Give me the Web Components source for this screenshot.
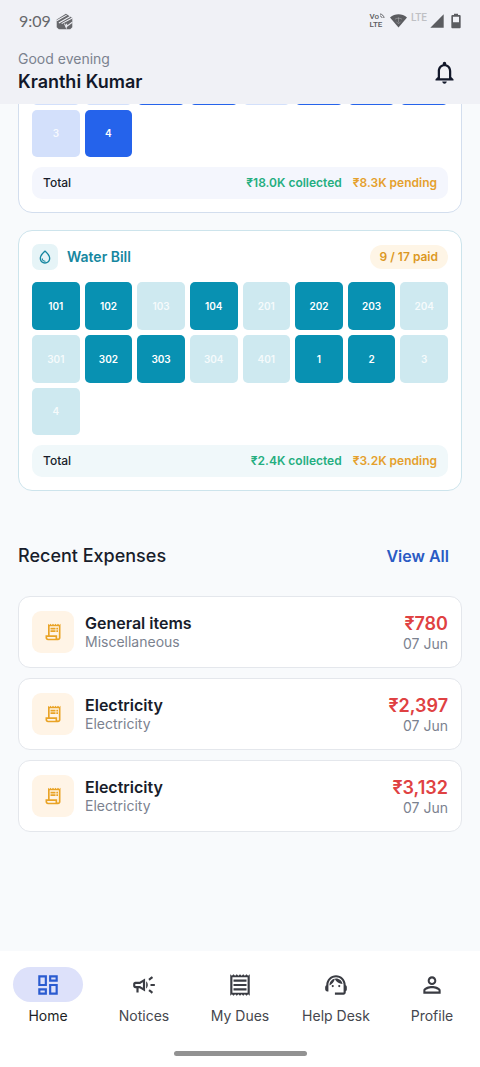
<!DOCTYPE html>
<html lang="en">
<head>
<meta charset="utf-8">
<meta name="viewport" content="width=device-width, initial-scale=1">
<title>Society Dues</title>
<style>
  body { margin: 0; background: #f8fafc; color: #181d2b; font-family: Inter, "Noto Sans", sans-serif; }
</style>
</head>
<body>
<society-app></society-app>
<script>
const ICONS = {
  home: '<path d="M19 5v2h-4V5h4M9 5v6H5V5h4m10 8v6h-4v-6h4M9 17v2H5v-2h4M21 3h-8v6h8V3zM11 3H3v10h8V3zm10 8h-8v10h8V11zm-10 4H3v6h8v-6z"/>',
  notices: '<path d="M18 11v2h4v-2h-4zM16 17.61c.96.71 2.21 1.65 3.2 2.39.4-.53.8-1.07 1.2-1.6-.99-.74-2.24-1.68-3.2-2.4-.4.54-.8 1.08-1.2 1.61zM20.4 5.6c-.4-.53-.8-1.07-1.2-1.6-.99.74-2.24 1.68-3.2 2.4.4.53.8 1.07 1.2 1.6.96-.72 2.21-1.65 3.2-2.4zM4 9c-1.1 0-2 .9-2 2v2c0 1.1.9 2 2 2h1v4h2v-4h1l5 3V6L8 9H4zm5.03 1.71L11 9.53v4.94l-1.97-1.18-.48-.29H4v-2h4.55l.48-.29zM15.5 12c0-1.33-.58-2.53-1.5-3.35v6.69c.92-.81 1.5-2.01 1.5-3.34z"/>',
  dues: '<path d="M19.5 3.5L18 2l-1.5 1.5L15 2l-1.5 1.5L12 2l-1.5 1.5L9 2 7.5 3.5 6 2 4.5 3.5 3 2v20l1.5-1.5L6 22l1.5-1.5L9 22l1.5-1.5L12 22l1.5-1.5L15 22l1.5-1.5L18 22l1.5-1.5L21 22V2l-1.5 1.5zM19 19.09H5V4.91h14v14.18zM6 15h12v2H6zm0-4h12v2H6zm0-4h12v2H6z"/>',
  help: '<path d="M21 12.22C21 6.73 16.74 3 12 3c-4.69 0-9 3.65-9 9.28-.6.34-1 .98-1 1.72v2c0 1.1.9 2 2 2h1v-6.1c0-3.87 3.13-7 7-7s7 3.13 7 7V19h-8v2h8c1.1 0 2-.9 2-2v-1.22c.59-.31 1-.92 1-1.64v-2.3c0-.7-.41-1.31-1-1.62z"/><circle cx="9" cy="13" r="1"/><circle cx="15" cy="13" r="1"/><path d="M18 11.03C17.52 8.18 15.04 6 12.05 6c-3.03 0-6.29 2.51-6.03 6.45 2.47-1.01 4.33-3.21 4.86-5.89 1.31 2.63 4 4.44 7.12 4.47z"/>',
  profile: '<path d="M12 5.9c1.16 0 2.1.94 2.1 2.1s-.94 2.1-2.1 2.1S9.9 9.16 9.9 8s.94-2.1 2.1-2.1m0 9c2.97 0 6.1 1.46 6.1 2.1v1.1H5.9V17c0-.64 3.13-2.1 6.1-2.1M12 4C9.79 4 8 5.79 8 8s1.79 4 4 4 4-1.79 4-4-1.79-4-4-4zm0 9c-2.67 0-8 1.34-8 4v3h16v-3c0-2.66-5.33-4-8-4z"/>',
  bill: '<path d="M19.5 3.5L18 2l-1.5 1.5L15 2l-1.5 1.5L12 2l-1.5 1.5L9 2 7.5 3.5 6 2v14H3v3c0 1.66 1.34 3 3 3h12c1.66 0 3-1.34 3-3V2l-1.5 1.5zM15 20H6c-.55 0-1-.45-1-1v-1h10v2zm4-1c0 .55-.45 1-1 1s-1-.45-1-1v-3H8V5h11v14zM9 7h6v2H9zM16 7h2v2h-2zM9 10h6v2H9zM16 10h2v2h-2z"/>',
  bell: '<path d="M12 22c1.1 0 2-.9 2-2h-4c0 1.1.9 2 2 2zm6-6v-5c0-3.07-1.63-5.64-4.5-6.32V4c0-.83-.67-1.5-1.5-1.5s-1.5.67-1.5 1.5v.68C7.64 5.36 6 7.92 6 11v5l-2 2v1h16v-1l-2-2zm-2 1H8v-6c0-2.48 1.51-4.5 4-4.5s4 2.02 4 4.5v6z"/>',
  drop: '<path d="M12 2c-5.33 4.55-8 8.48-8 11.8 0 4.98 3.8 8.2 8 8.2s8-3.22 8-8.2c0-3.32-2.67-7.25-8-11.8zm0 18c-3.35 0-6-2.57-6-6.2 0-2.34 1.95-5.44 6-9.14 4.05 3.7 6 6.79 6 9.14 0 3.63-2.65 6.2-6 6.2zm-4.17-6c.37 0 .67.26.74.62.41 2.22 2.28 2.98 3.64 2.87.43-.02.79.32.79.75 0 .4-.32.73-.72.75-2.13.13-4.62-1.09-5.19-4.12-.08-.45.28-.87.74-.87z"/>',
  cube: '<path d="M1 9 14 1l9 6v13l-3 3H4l-3-3z"/><path d="M1 11 15 3M4 14 20 5M8 15l15-8M12 15l3 7M15 15v4l8-6" fill="none" stroke="#f0f1f6" stroke-width="1.500"/>',
  wifi: '<path d="M12 21 0 7C7 1 17 1 24 7z"/><path d="M7 9.500c3-2 7-2 10 0M12 7v7M9 13l3 3 3-3" fill="none" stroke="#f0f1f6" stroke-opacity=".35" stroke-width="1.200"/>',
  signal: '<path d="M2 22 22 2v20z"/>',
  battery: '<path fill-rule="evenodd" d="M9 1h6v2h2c1.500 0 2 .7 2 2v16c0 1.500-.7 2-2 2H7c-1.500 0-2-.7-2-2V5c0-1.500.7-2 2-2h2zM7.500 5.500V14h9V5.500z"/>'
};

function define(name, render) {
  customElements.define(name, class extends HTMLElement {
    connectedCallback() {
      if (this.shadowRoot) return;
      const root = this.attachShadow({ mode: 'open' });
      root.innerHTML = render(this);
    }
  });
}

define('app-icon', el => `
  <style>:host{display:block;width:24px;height:24px;flex:none}svg{display:block;width:100%;height:100%;fill:currentColor}</style>
  <svg viewBox="0 0 24 24" aria-hidden="true">${ICONS[el.getAttribute('name')]}</svg>`);

define('status-bar', () => `
  <style>
    :host{display:flex;align-items:center;justify-content:space-between;height:42px;padding:0 16px 0 19px;color:#5b5c60}
    div{display:flex;align-items:center}
    time{font:16px/20px Lato,sans-serif}
    .left{gap:5px;color:#66676b}
    .left app-icon{width:17px;height:17px}
    .volte{display:grid;font:500 8px/8px Roboto,sans-serif;margin-right:5px}
    .vo{display:flex}
    .vo svg{width:6px;height:6px;fill:none;stroke:currentColor;stroke-width:1}
    .wifi{width:17px;height:18px}
    .lte{font:500 10px/12px Roboto,sans-serif;color:#bfc0c4;margin:0 2px 6px 4px}
    .signal{width:16px;height:16px}
    .battery{width:16px;height:16px;margin-left:3px}
  </style>
  <div class="left"><time>9:09</time><app-icon name="cube"></app-icon></div>
  <div>
    <span class="volte"><span class="vo">Vo<svg viewBox="0 0 6 6"><path d="M1 1c2 0 4 2 4 4M1 3c1 0 2 1 2 2"/></svg></span><span>LTE</span></span>
    <app-icon class="wifi" name="wifi"></app-icon>
    <span class="lte">LTE</span>
    <app-icon class="signal" name="signal"></app-icon>
    <app-icon class="battery" name="battery"></app-icon>
  </div>`);

define('app-header', () => `
  <style>
    :host{display:block;background:#f0f1f6}
    .row{display:flex;align-items:center;justify-content:space-between;height:62px;padding:0 22px 0 18px;box-sizing:border-box}
    p,h1{margin:0}
    .who{padding-bottom:2px}
    p{font-size:14px;line-height:20px;color:#7b828f}
    h1{font-size:18px;line-height:26px;font-weight:600;color:#12182a}
    button{border:0;background:none;padding:0 0 2px;margin:0;color:#12182a;cursor:pointer}
    app-icon{width:27px;height:27px}
  </style>
  <status-bar></status-bar>
  <div class="row">
    <div class="who"><p>Good evening</p><h1>Kranthi Kumar</h1></div>
    <button aria-label="Notifications"><app-icon name="bell"></app-icon></button>
  </div>`);

define('unit-tile', () => `
  <style>
    :host{display:flex;align-items:center;justify-content:center;aspect-ratio:1;border-radius:5px;background:var(--due);color:#ffffffd0;font-size:10px;line-height:12px;font-weight:600}
    :host([paid]){background:var(--paid);color:#fff}
  </style><slot></slot>`);

define('bill-card', el => `
  <style>
    :host{display:block;box-sizing:border-box;padding:13px;border:1px solid var(--edge);border-radius:14px;background:#fff}
    .tiles{display:grid;grid-template-columns:repeat(8,minmax(0,1fr));gap:5px}
    .total{display:flex;align-items:center;gap:11px;height:32px;margin-top:10px;padding:0 11px;border-radius:10px;background:var(--tint);font-size:12px;line-height:16px}
    .total span{flex:1;font-weight:500}
    .got{color:#24ae80}.left{color:#e5a02c}
    b{font-weight:600}
  </style>
  <slot name="head"></slot>
  <div class="tiles"><slot></slot></div>
  <div class="total"><span>Total</span><b class="got">${el.getAttribute('collected')} collected</b><b class="left">${el.getAttribute('pending')} pending</b></div>`);

define('bill-head', el => `
  <style>
    :host{display:flex;align-items:center;height:26px;margin-bottom:12px}
    .badge{display:grid;place-items:center;width:26px;height:26px;border-radius:7px;background:#e6f4f7;color:#1687a0}
    .badge app-icon{width:16px;height:16px}
    h2{flex:1;margin:0 0 0 9px;font-size:14px;line-height:20px;font-weight:600;color:#1687a0}
    .count{padding:4px 10px;border-radius:12px;background:#fef5e6;color:#dc981f;font-size:12px;line-height:16px;font-weight:600}
  </style>
  <div class="badge"><app-icon name="drop"></app-icon></div>
  <h2><slot></slot></h2>
  <span class="count">${el.getAttribute('count')}</span>`);

define('expense-card', el => `
  <style>
    :host{display:flex;align-items:center;box-sizing:border-box;padding:14px 13px;border:1px solid #e4e7ec;border-radius:12px;background:#fff}
    .badge{display:grid;place-items:center;width:42px;height:42px;border-radius:9px;background:#fff4e6;color:#e9a326}
    .badge app-icon{width:20px;height:20px}
    .text{flex:1;margin-left:11px}
    .sum{padding-top:2px;text-align:right}
    h3,p{margin:0}
    h3{font-size:16px;line-height:20px;font-weight:600}
    p{font-size:14px;line-height:18px;color:#7b828f}
    strong{display:block;font-size:18px;line-height:22px;font-weight:600;color:#df4142}
  </style>
  <div class="badge"><app-icon name="bill"></app-icon></div>
  <div class="text"><h3>${el.getAttribute('name')}</h3><p>${el.getAttribute('category')}</p></div>
  <div class="sum"><strong>${el.getAttribute('amount')}</strong><p>${el.getAttribute('date')}</p></div>`);

define('nav-item', el => `
  <style>
    :host{display:block;flex:1 1 0;min-width:0}
    a{display:flex;flex-direction:column;align-items:center;gap:5px;color:#45474e;text-decoration:none;font-size:14px;line-height:18px;white-space:nowrap}
    .pill{display:grid;place-items:center;width:70px;height:35px;border-radius:18px;color:#3a3c43}
    .pill app-icon{width:26px;height:26px}
    :host([active]) a{color:#1d1f26}
    :host([active]) .pill{background:#dde1fa;color:#2a5bd0}
  </style>
  <a href="#${el.getAttribute('icon')}"><span class="pill"><app-icon name="${el.getAttribute('icon')}"></app-icon></span><slot></slot></a>`);

define('bottom-nav', () => `
  <style>
    :host{display:block;background:#fff}
    nav{display:flex;padding:16px 0 26px}
    .handle{width:133px;height:5px;margin:0 auto 11px;border-radius:3px;background:#929292}
  </style>
  <nav><slot></slot></nav><div class="handle"></div>`);

const tiles = (list) => list.map(([label, paid]) => `<unit-tile${paid ? ' paid' : ''}>${label}</unit-tile>`).join('');
const rent = [['',0],['',0],['',1],['',1],['',0],['',1],['',1],['',1],['3',0],['4',1]];
const water = [['101',1],['102',1],['103',0],['104',1],['201',0],['202',1],['203',1],['204',0],
  ['301',0],['302',1],['303',1],['304',0],['401',0],['1',1],['2',1],['3',0],['4',0]];

define('society-app', () => `
  <style>
    :host{display:flex;flex-direction:column;min-height:100vh}
    main{flex:1;overflow:hidden;padding:0 18px}
    .rent{--paid:#2563eb;--due:#d3e0fb;--edge:#d3deee;--tint:#f4f6fd;margin-top:-61px}
    .water{--paid:#0891b2;--due:#cee9f0;--edge:#cde4ec;--tint:#f0f8fa;margin-top:17px}
    .title{display:flex;align-items:center;justify-content:space-between;margin:50px 0 25px;height:30px}
    h2{margin:0;font-size:18px;line-height:24px;font-weight:500}
    button{border:0;background:none;padding:0 13px;font:600 16px/24px Inter,sans-serif;color:#2a5bc4;cursor:pointer}
    .list{display:grid;gap:10px}
  </style>
  <app-header></app-header>
  <main>
    <bill-card class="rent" collected="₹18.0K" pending="₹8.3K">${tiles(rent)}</bill-card>
    <bill-card class="water" collected="₹2.4K" pending="₹3.2K"><bill-head slot="head" count="9 / 17 paid">Water Bill</bill-head>${tiles(water)}</bill-card>
    <div class="title"><h2>Recent Expenses</h2><button>View All</button></div>
    <div class="list">
      <expense-card name="General items" category="Miscellaneous" amount="₹780" date="07 Jun"></expense-card>
      <expense-card name="Electricity" category="Electricity" amount="₹2,397" date="07 Jun"></expense-card>
      <expense-card name="Electricity" category="Electricity" amount="₹3,132" date="07 Jun"></expense-card>
    </div>
  </main>
  <bottom-nav>
    <nav-item icon="home" active>Home</nav-item>
    <nav-item icon="notices">Notices</nav-item>
    <nav-item icon="dues">My Dues</nav-item>
    <nav-item icon="help">Help Desk</nav-item>
    <nav-item icon="profile">Profile</nav-item>
  </bottom-nav>`);
</script>
</body>
</html>
